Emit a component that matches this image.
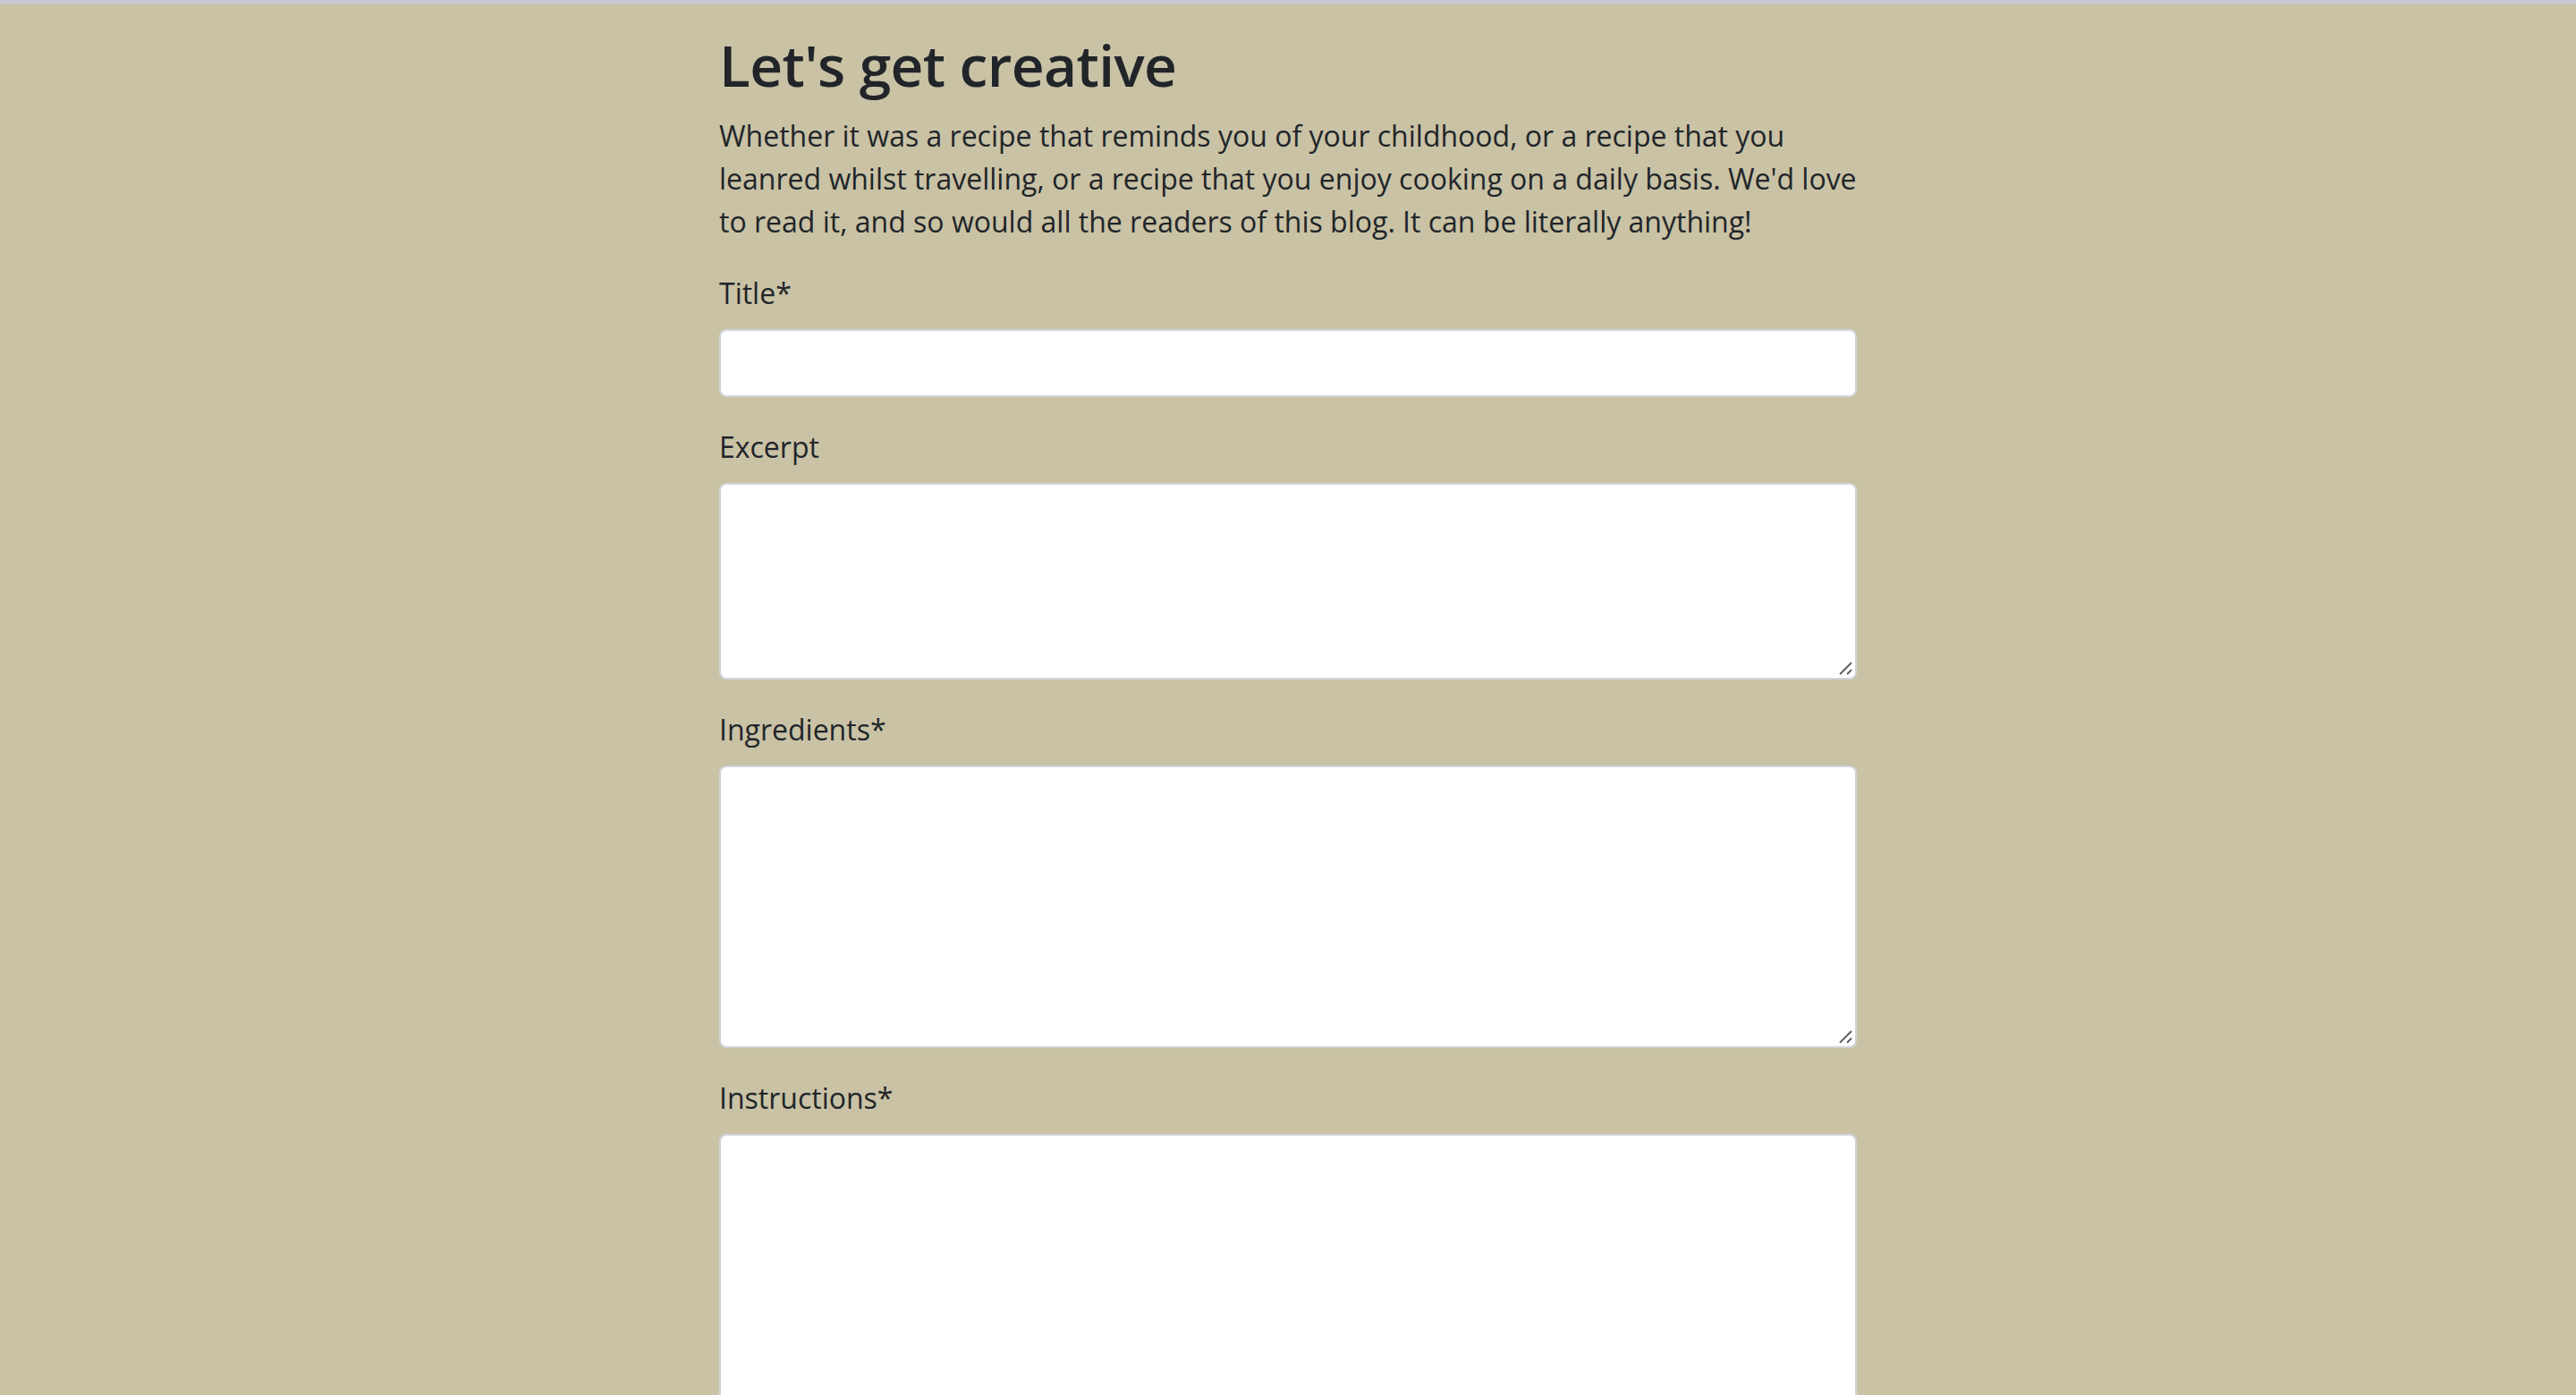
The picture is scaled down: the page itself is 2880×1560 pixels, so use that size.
import React from "react";

const fields = [
  { id: "title", label: "Title*", kind: "input" },
  { id: "excerpt", label: "Excerpt", kind: "textarea", height: "h-[220px]" },
  { id: "ingredients", label: "Ingredients*", kind: "textarea", height: "h-[316px]" },
  { id: "instructions", label: "Instructions*", kind: "textarea", height: "h-[420px]" },
];

const controlClass =
  "block w-full rounded-[8px] border-2 border-[#ced4da] bg-white px-6 py-3 text-[32px] leading-[48px] text-[#212529] outline-none";

// the grip chrome draws in the corner of a textarea, at retina size
const ResizeGrip: React.FC = () => (
  <svg
    className="pointer-events-none absolute bottom-[3px] right-[3px]"
    width="18"
    height="18"
    viewBox="0 0 18 18"
  >
    <line x1="15" y1="2" x2="2" y2="15" stroke="#5f5f5f" strokeWidth="2" />
    <line x1="15" y1="10" x2="10" y2="15" stroke="#5f5f5f" strokeWidth="2" />
  </svg>
);

const App: React.FC = () => {
  return (
    <div
      className="min-h-screen bg-[#c9c2a5] text-[#212529]"
      style={{ fontFamily: '"Open Sans", "Liberation Sans", sans-serif' }}
    >
      <div className="h-[4px] bg-[#c8c7d6]" />
      <div className="mx-auto w-[1272px] pt-[31px]">
        <h2 className="mb-[16px] text-[64px] font-semibold leading-[1.2] tracking-[-0.6px]">
          Let's get creative
        </h2>
        <p className="mb-[32px] text-[32px] leading-[48px]">
          Whether it was a recipe that reminds you of your childhood, or a
          recipe that you leanred whilst travelling, or a recipe that you enjoy
          cooking on a daily basis. We'd love to read it, and so would all the
          readers of this blog. It can be literally anything!
        </p>

        <form>
          {fields.map((field) => (
            <div key={field.id} className="mb-[32px]">
              <label
                htmlFor={field.id}
                className="mb-[16px] block text-[32px] leading-[48px]"
              >
                {field.label}
              </label>
              {field.kind === "input" ? (
                <input id={field.id} type="text" className={controlClass + " h-[76px]"} />
              ) : (
                <div className="relative">
                  <textarea
                    id={field.id}
                    className={controlClass + " resize-none " + field.height}
                  />
                  <ResizeGrip />
                </div>
              )}
            </div>
          ))}
        </form>
      </div>
    </div>
  );
};

export default App;
